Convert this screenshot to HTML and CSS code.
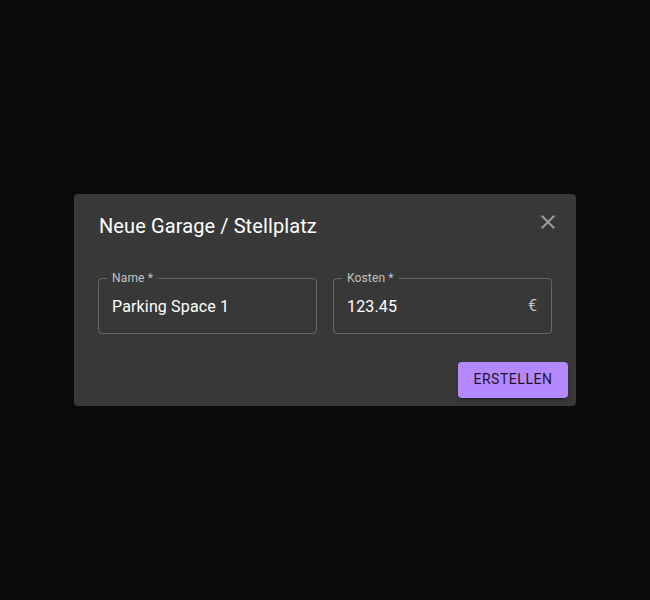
FILE: index.html
```html
<!DOCTYPE html>
<html lang="de">
<head>
<meta charset="utf-8">
<title>Neue Garage / Stellplatz</title>
<link rel="stylesheet" href="styles.css">
</head>
<body>
<div class="backdrop">
  <div class="dialog" role="dialog">
    <h2 class="dialog-title">Neue Garage / Stellplatz</h2>
    <button class="close-btn" aria-label="Schließen">
      <svg viewBox="0 0 24 24" width="24" height="24"><path d="M19 6.41 17.59 5 12 10.59 6.41 5 5 6.41 10.59 12 5 17.59 6.41 19 12 13.41 17.59 19 19 17.59 13.41 12z" fill="currentColor"/></svg>
    </button>
    <div class="dialog-content">
      <div class="field">
        <span class="field-label">Name *</span>
        <div class="field-input">Parking Space 1</div>
      </div>
      <div class="field">
        <span class="field-label">Kosten *</span>
        <div class="field-input">123.45</div>
        <span class="adornment">€</span>
      </div>
    </div>
    <div class="dialog-actions">
      <button class="btn-primary">Erstellen</button>
    </div>
  </div>
</div>
</body>
</html>
```
FILE: styles.css
```css
* { box-sizing: border-box; }
html, body { margin: 0; padding: 0; }
body {
  background: #0a0a0a;
  font-family: Roboto, "Liberation Sans", sans-serif;
  color: #fff;
  width: 650px;
  height: 600px;
}
.backdrop {
  width: 650px;
  height: 600px;
  display: flex;
  justify-content: center;
  padding-top: 194px;
}
.dialog {
  position: relative;
  width: 502px;
  height: 212px;
  background: #383838;
  border-radius: 4px;
  display: flex;
  flex-direction: column;
}
.dialog-title {
  margin: 0;
  padding: 16px 24px 16px 25px;
  font-size: 20px;
  font-weight: 400;
  line-height: 32px;
  letter-spacing: 0.1px;
  color: #fff;
}
.close-btn {
  position: absolute;
  top: 8px;
  right: 8px;
  width: 40px;
  height: 40px;
  padding: 8px;
  border: 0;
  background: transparent;
  color: rgba(255, 255, 255, 0.5);
  display: flex;
  align-items: center;
  justify-content: center;
  border-radius: 50%;
}
.dialog-content {
  padding: 20px 24px 20px;
  padding-top: 36px;
  margin-top: -16px;
  display: flex;
  gap: 16px;
}
.field {
  position: relative;
  flex: 1;
  height: 56px;
  border: 1px solid rgba(255, 255, 255, 0.23);
  border-radius: 4px;
  display: flex;
  align-items: center;
}
.field-label {
  position: absolute;
  left: 8px;
  top: -7px;
  padding: 0 5px;
  background: #383838;
  font-size: 12px;
  line-height: 12px;
  color: rgba(255, 255, 255, 0.7);
  letter-spacing: 0.15px;
}
.field-input {
  flex: 1;
  padding: 0 13px;
  font-size: 16px;
  line-height: 23px;
  letter-spacing: 0.15px;
  color: #fff;
  margin-top: 1px;
}
.adornment {
  padding-right: 14px;
  font-size: 16px;
  color: rgba(255, 255, 255, 0.7);
  margin-top: -2px;
}
.dialog-actions {
  padding: 8px;
  display: flex;
  justify-content: flex-end;
}
.btn-primary {
  height: 36px;
  width: 110px;
  padding: 5px 8px 7px;
  border: 0;
  border-radius: 4px;
  background: #b388ff;
  color: rgba(0, 0, 0, 0.87);
  font-family: Roboto, "Liberation Sans", sans-serif;
  font-size: 14px;
  font-weight: 400;
  letter-spacing: 0.55px;
  text-transform: uppercase;
  box-shadow: 0 3px 1px -2px rgba(0,0,0,0.2), 0 2px 2px 0 rgba(0,0,0,0.14), 0 1px 5px 0 rgba(0,0,0,0.12);
}
```
